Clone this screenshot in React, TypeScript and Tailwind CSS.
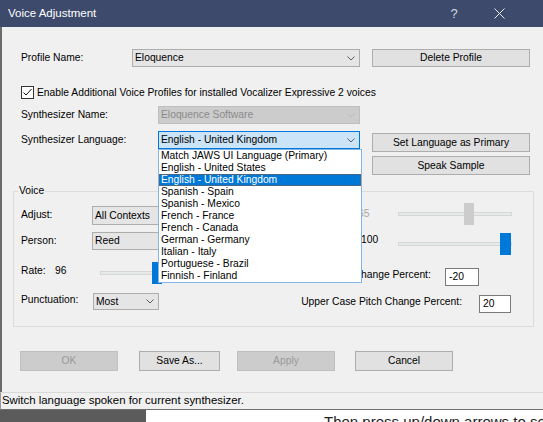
import React from "react";

const SANS = { fontFamily: '"Liberation Sans", Arial, sans-serif' };

/* ── small chevron used by every combo ── */
function Chevron({ disabled }: { disabled?: boolean }) {
  return (
    <svg width="8" height="5" viewBox="0 0 8 5" className="shrink-0">
      <polyline
        points="0.5,0.5 4,4 7.5,0.5"
        fill="none"
        stroke={disabled ? "#bdbdbd" : "#5f5f5f"}
        strokeWidth="1"
      />
    </svg>
  );
}

type ComboVariant = "normal" | "disabled" | "focus";

const COMBO_CLS: Record<ComboVariant, string> = {
  normal: "bg-[#e5e5e5] border-[#adadad] text-black",
  disabled: "bg-[#cccccc] border-[#bfbfbf] text-[#8a8a8a]",
  focus: "bg-[#cce4f7] border-[#0078d7] text-black",
};

function Combo({ value, className, variant = "normal" }: { value: string; className: string; variant?: ComboVariant }) {
  return (
    <div className={`flex items-center border pl-[2px] pr-[4px] shrink-0 ${COMBO_CLS[variant]} ${className}`}>
      <span className="flex-1 whitespace-nowrap overflow-hidden">{value}</span>
      <Chevron disabled={variant === "disabled"} />
    </div>
  );
}

function Button({ label, className, disabled }: { label: string; className: string; disabled?: boolean }) {
  return (
    <div
      className={`flex items-center justify-center border shrink-0 whitespace-nowrap ${
        disabled ? "bg-[#cccccc] border-[#bfbfbf] text-[#9a9a9a]" : "bg-[#e1e1e1] border-[#adadad] text-black"
      } ${className}`}
    >
      {label}
    </div>
  );
}

function Slider({ className, thumbLeft, thumbW, disabled }: { className: string; thumbLeft: number; thumbW: number; disabled?: boolean }) {
  return (
    <div className={`relative h-[22px] shrink-0 ${className}`}>
      <div className="absolute left-0 right-0 top-[9px] h-[4px] bg-[#e7eaea] border border-[#d6d6d6]" />
      <div
        className={`absolute top-0 h-[22px] ${disabled ? "bg-[#cccccc]" : "bg-[#0078d7]"}`}
        style={{ left: thumbLeft, width: thumbW }}
      />
    </div>
  );
}

function TextBox({ value, className }: { value: string; className: string }) {
  return (
    <div className={`flex items-center bg-white border border-[#7a7a7a] pl-[3px] shrink-0 ${className}`}>{value}</div>
  );
}

const LANGUAGES = [
  "Match JAWS UI Language (Primary)",
  "English - United States",
  "English - United Kingdom",
  "Spanish - Spain",
  "Spanish - Mexico",
  "French - France",
  "French - Canada",
  "German - Germany",
  "Italian - Italy",
  "Portuguese - Brazil",
  "Finnish - Finland",
];

export default function App() {
  return (
    <div className="w-[543px] h-[422px] overflow-hidden bg-white flex flex-col" style={SANS}>
      {/* ── Title bar ── */}
      <div className="h-[27px] shrink-0 bg-[#3d4a6b] flex items-center text-white">
        <span className="ml-[8px] text-[11.5px]">Voice Adjustment</span>
        <span className="ml-auto w-[10px] text-center text-[13px] text-[#d5d9e2]">?</span>
        <svg width="11" height="11" viewBox="0 0 11 11" className="ml-[35px] mr-[38px]">
          <path d="M0.5 0.5 L10.5 10.5 M10.5 0.5 L0.5 10.5" stroke="#e8ebf0" strokeWidth="1" />
        </svg>
      </div>

      {/* ── Dialog body ── */}
      <div className="relative h-[365px] shrink-0 bg-[#f0f0f0] border-l-2 border-[#6b6b6b] pl-[19px] flex flex-col text-[10.3px] leading-[12px] text-black">
        {/* Profile */}
        <div className="flex items-center h-[18px] mt-[22px]">
          <span className="w-[111px] shrink-0">Profile Name:</span>
          <Combo value="Eloquence" className="w-[228px] h-[18px]" />
          <Button label="Delete Profile" className="ml-[12px] w-[158px] h-[18px]" />
        </div>

        {/* Checkbox */}
        <div className="flex items-center h-[13px] mt-[19px]">
          <div className="w-[13px] h-[13px] bg-white border border-[#333333] shrink-0 flex items-center justify-center">
            <svg width="11" height="11" viewBox="0 0 11 11">
              <polyline points="1.5,5.5 4,8 9.5,2" fill="none" stroke="#111" strokeWidth="1" />
            </svg>
          </div>
          <span className="ml-[3px] whitespace-nowrap">
            Enable Additional Voice Profiles for installed Vocalizer Expressive 2 voices
          </span>
        </div>

        {/* Synthesizer name */}
        <div className="flex items-center h-[18px] mt-[7px]">
          <span className="w-[137px] shrink-0">Synthesizer Name:</span>
          <Combo value="Eloquence Software" className="w-[202px] h-[18px]" variant="disabled" />
        </div>

        {/* Synthesizer language + buttons */}
        <div className="flex items-start mt-[7px]">
          <div className="flex items-center h-[18px]">
            <span className="w-[137px] shrink-0">Synthesizer Language:</span>
            <Combo value="English - United Kingdom" className="w-[202px] h-[18px]" variant="focus" />
          </div>
          <div className="ml-[12px] mt-[2px] flex flex-col gap-[4px]">
            <Button label="Set Language as Primary" className="w-[158px] h-[19px]" />
            <Button label="Speak Sample" className="w-[158px] h-[19px]" />
          </div>
        </div>

        {/* ── Voice group ── */}
        <div className="relative mt-[16px] ml-[-8px] w-[521px] h-[136px] border border-[#dcdcdc] pl-[7px] flex flex-col">
          <span className="absolute left-[4px] top-[-7px] px-[1px] bg-[#f0f0f0]">Voice</span>

          {/* Adjust */}
          <div className="flex items-start h-[22px] mt-[11px]">
            <span className="w-[71px] mt-[6px] shrink-0">Adjust:</span>
            <Combo value="All Contexts" className="w-[168px] h-[19px] mt-[3px]" />
            <span className="ml-[98px] w-[40px] mt-[5px] text-[#a6a6a6] shrink-0">65</span>
            <Slider className="w-[114px]" thumbLeft={66} thumbW={10} disabled />
          </div>

          {/* Person */}
          <div className="flex items-start h-[23px] mt-[7px]">
            <span className="w-[71px] mt-[3px] shrink-0">Person:</span>
            <Combo value="Reed" className="w-[168px] h-[18px]" />
            <span className="ml-[101px] w-[37px] mt-[2px] shrink-0">100</span>
            <Slider className="w-[114px] mt-[1px]" thumbLeft={102} thumbW={11} />
          </div>

          {/* Rate */}
          <div className="flex items-start h-[24px] mt-[7px]">
            <span className="w-[34px] mt-[3px] shrink-0">Rate:</span>
            <span className="w-[45px] mt-[3px] shrink-0">96</span>
            <Slider className="w-[170px]" thumbLeft={52} thumbW={10} />
            <span className="w-[158px] mt-[7px] text-right whitespace-nowrap shrink-0">Lower Case Pitch Change Percent:</span>
            <TextBox value="-20" className="ml-[17px] w-[34px] h-[18px] mt-[6px]" />
          </div>

          {/* Punctuation */}
          <div className="flex items-start h-[21px] mt-[6px]">
            <span className="w-[72px] mt-[2px] shrink-0">Punctuation:</span>
            <Combo value="Most" className="w-[66px] h-[17px] mt-[1px]" />
            <span className="w-[303px] mt-[4px] text-right whitespace-nowrap shrink-0">Upper Case Pitch Change Percent:</span>
            <TextBox value="20" className="ml-[17px] w-[32px] h-[18px] mt-[3px]" />
          </div>
        </div>

        {/* ── Bottom buttons ── */}
        <div className="flex items-center h-[20px] mt-[24px]">
          <Button label="OK" className="ml-[-1px] w-[98px] h-[20px]" disabled />
          <Button label="Save As..." className="ml-[21px] w-[81px] h-[20px]" />
          <Button label="Apply" className="ml-[17px] w-[98px] h-[20px]" disabled />
          <Button label="Cancel" className="ml-[20px] w-[98px] h-[20px]" />
        </div>

        {/* ── Open language list (overlay) ── */}
        <div className="absolute left-[156px] top-[122px] w-[204px] h-[134px] z-10 bg-white border border-[#84b3e5] flex flex-col">
          {LANGUAGES.map((lang, i) =>
            i === 2 ? (
              <div
                key={lang}
                className="h-[12px] pl-[2px] bg-[#0078d7] text-white whitespace-nowrap shadow-[inset_0_0_0_1px_#4d6580]"
              >
                {lang}
              </div>
            ) : (
              <div key={lang} className="h-[12px] pl-[2px] whitespace-nowrap">
                {lang}
              </div>
            )
          )}
        </div>
      </div>

      {/* ── Status bar ── */}
      <div className="h-[18px] shrink-0 bg-[#f0f0f0] border-t border-[#d9d9d9] border-b border-b-[#6f6f6f] border-l border-l-[#9a9a9a] pl-[1px] flex items-center text-[11.4px] text-black">
        Switch language spoken for current synthesizer.
      </div>

      {/* ── Page behind the dialog (only the tops of its text show) ── */}
      <div className="h-[12px] shrink-0 flex overflow-hidden">
        <div className="w-[146px] h-full bg-[#5b5b5b] shrink-0" />
        <div className="flex-1 bg-white overflow-hidden whitespace-nowrap text-[15px] leading-[15px] text-[#222] flex items-start pt-[4px]">
          <span className="ml-[150px]">-</span>
          <span className="ml-[23px]">Then press up/down arrows to select</span>
        </div>
      </div>
    </div>
  );
}
